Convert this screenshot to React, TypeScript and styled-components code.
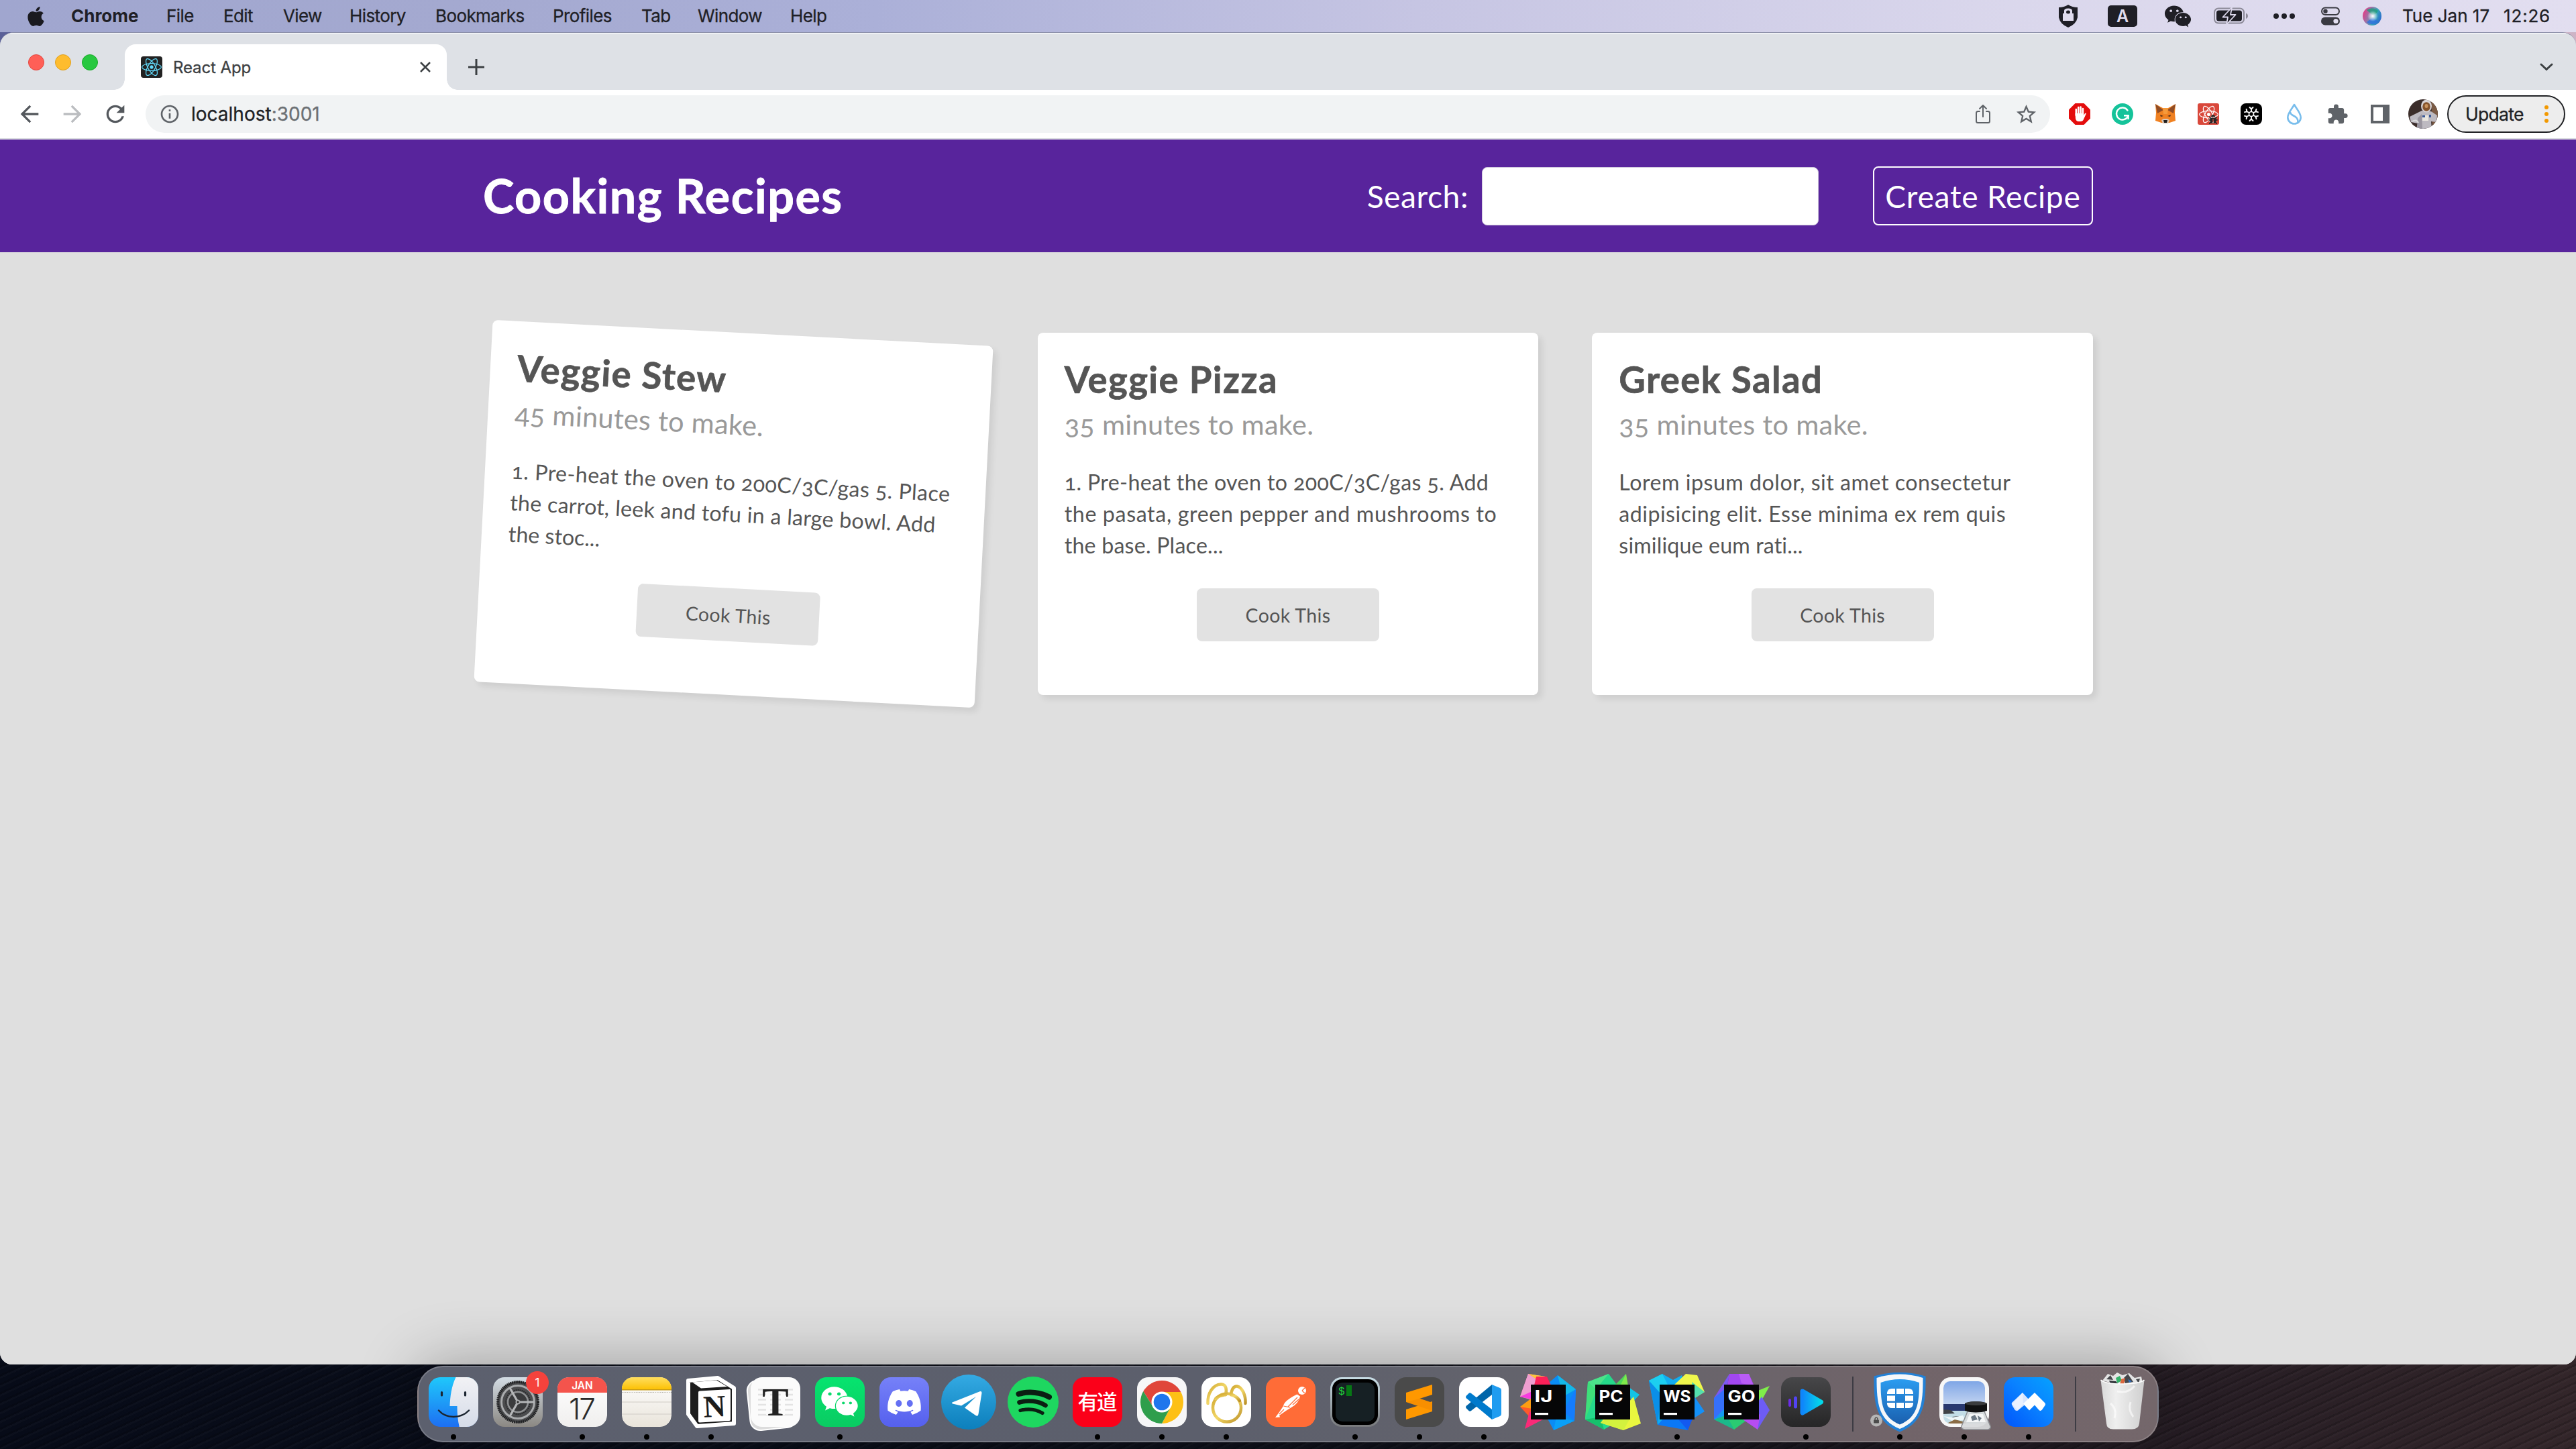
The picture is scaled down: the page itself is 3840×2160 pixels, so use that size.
import React from "react";
import styled, { createGlobalStyle, css } from "styled-components";
import { FaApple, FaWeixin, FaDiscord, FaReact, FaBug, FaLock } from "react-icons/fa";
import { MdArrowBack, MdArrowForward, MdRefresh, MdStarOutline, MdExtension, MdOutlineInfo } from "react-icons/md";
import { IoShareOutline } from "react-icons/io5";

const uiFont = `Inter, "Liberation Sans", sans-serif`;
const pageFont = `Lato, "Open Sans", sans-serif`;

const GlobalStyle = createGlobalStyle`
  *, *::before, *::after { box-sizing: border-box; }
  body { margin: 0; background: #0a0d18; overflow: hidden; }
  h1, h2, p { margin: 0; }
`;

/* ---------- desktop ---------- */

const Desktop = styled.div`
  width: 3840px;
  height: 2160px;
  display: flex;
  flex-direction: column;
  font-family: ${uiFont};
  background:
    linear-gradient(90deg, #5a6098 0, #a79fc0 50%, #cdb4c6 100%) 0 0 / 100% 90px no-repeat,
    repeating-linear-gradient(155deg, rgba(255, 255, 255, 0.018) 0 3px, transparent 3px 9px, rgba(0, 0, 0, 0.16) 9px 12px),
    linear-gradient(90deg, #070b18 0, #0a0e1a 30%, #12131c 60%, #261d24 85%, #33262a 100%);
`;

const MenuBar = styled.header`
  height: 48px;
  flex: none;
  display: flex;
  justify-content: space-between;
  align-items: center;
  padding: 0 38px 0 37px;
  color: #1f1f26;
  font-size: 26px;
  line-height: 46px;
  white-space: pre;
  background: linear-gradient(90deg, #a0a6cf 0, #a4a9d0 18%, #abb0d8 34%, #c6c5e3 55%, #dad7ec 78%, #e2def0 100%);
`;

const MenuGroup = styled.div`
  display: flex;
  align-items: center;
`;

const MenuApple = styled.span`
  width: 69px;
  display: flex;
  color: #1a1a20;
`;

const MenuItem = styled.span<{ $width: number; $strong?: boolean }>`
  width: ${(p) => p.$width}px;
  font-weight: ${(p) => (p.$strong ? 700 : 400)};
  letter-spacing: ${(p) => (p.$strong ? 0 : -0.6)}px;
  -webkit-text-stroke: ${(p) => (p.$strong ? 0 : 0.3)}px currentColor;
`;

const StatusSlot = styled.span<{ $width: number }>`
  width: ${(p) => p.$width}px;
  display: flex;
  justify-content: center;
  align-items: center;
`;

const Clock = styled.span`
  width: 221px;
  display: flex;
  justify-content: space-between;
  -webkit-text-stroke: 0.3px currentColor;
`;

const ClockTime = styled.span`
  letter-spacing: 0.8px;
`;

/* ---------- browser window ---------- */

const Window = styled.section`
  flex: none;
  height: 1986px;
  display: flex;
  flex-direction: column;
  border-radius: 20px 20px 18px 18px;
  overflow: hidden;
  background: #dfdfdf;
  border-top: 1px solid #8b8fa8;
`;

const TabStrip = styled.div`
  flex: none;
  height: 85px;
  display: flex;
  align-items: flex-end;
  background: #dee1e6;
  border-top: 2px solid #eff1f4;
  padding: 0 34px 0 42px;
`;

const TrafficLights = styled.div`
  display: flex;
  gap: 16px;
  width: 144px;
  height: 82px;
  align-items: center;
`;

const Light = styled.span<{ $fill: string; $edge: string }>`
  width: 24px;
  height: 24px;
  border-radius: 50%;
  background: ${(p) => p.$fill};
  border: 1px solid ${(p) => p.$edge};
`;

const Tab = styled.div`
  position: relative;
  width: 480px;
  height: 68px;
  display: flex;
  align-items: center;
  padding: 0 24px;
  gap: 16px;
  background: #fff;
  border-radius: 16px 16px 0 0;
  color: #3c4043;
  font-size: 24px;

  &::before,
  &::after {
    content: "";
    position: absolute;
    bottom: 0;
    width: 16px;
    height: 16px;
  }
  &::before {
    left: -16px;
    background: radial-gradient(circle at 0 0, transparent 15.5px, #fff 16px);
  }
  &::after {
    right: -16px;
    background: radial-gradient(circle at 100% 0, transparent 15.5px, #fff 16px);
  }
`;

const Favicon = styled.span`
  width: 32px;
  height: 32px;
  border-radius: 4px;
  display: grid;
  place-items: center;
  background: #222;
  color: #61dafb;
`;

const TabTitle = styled.span`
  flex: 1;
  letter-spacing: -0.1px;
  -webkit-text-stroke: 0.3px currentColor;
`;

const StripButton = styled.span<{ $push?: boolean }>`
  display: flex;
  align-items: center;
  height: 68px;
  padding-left: 32px;
  margin-left: ${(p) => (p.$push ? "auto" : 0)};
`;

const Toolbar = styled.div`
  flex: none;
  height: 74px;
  display: flex;
  align-items: center;
  padding: 0 16px 0 12px;
  background: #fff;
  border-bottom: 2px solid #dadce0;
`;

const NavButton = styled.span<{ $dim?: boolean }>`
  width: 64px;
  display: flex;
  justify-content: center;
  color: ${(p) => (p.$dim ? "#bbbdc0" : "#54585d")};
`;

const Omnibox = styled.div`
  flex: 1;
  height: 56px;
  margin: 0 12px 0 13px;
  padding: 0 20px;
  border-radius: 28px;
  background: #f1f3f4;
  color: #5f6368;
  display: flex;
  align-items: center;
  font-size: 28px;
`;

const Url = styled.span`
  flex: 1;
  padding-left: 16px;
  color: #6c7074;
  -webkit-text-stroke: 0.3px currentColor;
`;

const UrlHost = styled.span`
  color: #202124;
`;

const OmniAction = styled.span`
  width: 64px;
  display: flex;
  justify-content: center;
  &:last-child { margin-right: -16px; }
`;

const ExtensionSlot = styled.span`
  width: 64px;
  display: flex;
  justify-content: center;
  align-items: center;
`;

const ExtensionTile = styled.span<{ $bg: string; $radius: number }>`
  width: 32px;
  height: 32px;
  display: grid;
  place-items: center;
  color: #fff;
  background: ${(p) => p.$bg};
  border-radius: ${(p) => p.$radius}px;
`;

const StackedIcons = styled.span`
  position: relative;
  display: grid;
  svg:last-child { position: absolute; right: 1px; bottom: 0; }
`;

const UpdatePill = styled.div`
  width: 176px;
  height: 56px;
  margin-left: 4px;
  border: 2px solid #202124;
  border-radius: 28px;
  background: #ededed;
  color: #202124;
  font-size: 26.5px;
  letter-spacing: -0.7px;
  display: flex;
  align-items: center;
  justify-content: space-between;
  padding: 0 23px 0 25px;
  -webkit-text-stroke: 0.3px currentColor;
`;

const DotColumn = styled.span`
  display: flex;
  flex-direction: column;
  gap: 4px;
`;

const UpdateDot = styled.i`
  width: 6px;
  height: 6px;
  border-radius: 50%;
  background: #f29900;
`;

/* ---------- recipes page ---------- */

const Page = styled.main`
  flex: 1;
  font-family: ${pageFont};
  font-variant-numeric: oldstyle-nums;
  background: #dfdfdf;
  color: #555;
  white-space: nowrap;
`;

const Banner = styled.div`
  height: 168px;
  background: #58249c;
`;

const BannerInner = styled.div`
  width: 2400px;
  height: 100%;
  margin: 0 auto;
  display: flex;
  align-items: center;
  color: #fff;
`;

const SiteTitle = styled.h1`
  flex: 1;
  font-size: 70px;
  line-height: 82px;
  letter-spacing: 1.5px;
  padding-bottom: 2px;
  -webkit-text-stroke: 0.9px currentColor;
`;

const SearchLabel = styled.label`
  display: flex;
  align-items: center;
  gap: 20px;
  font-size: 46.2px;
  letter-spacing: 0.55px;
`;

const SearchInput = styled.input`
  width: 502px;
  height: 87px;
  border: 1px solid #cfc6dc;
  border-radius: 8px;
  background: #fff;
`;

const CreateLink = styled.button`
  width: 328px;
  height: 88px;
  margin-left: 81px;
  padding: 0;
  border: 2px solid #fff;
  border-radius: 8px;
  background: transparent;
  color: #fff;
  font: 46.2px ${pageFont};
  letter-spacing: 0.75px;
`;

const Grid = styled.div`
  width: 2400px;
  margin: 120px auto 0;
  display: grid;
  grid-template-columns: repeat(3, 1fr);
  gap: 80px;
`;

const Card = styled.article<{ $tilted?: boolean }>`
  height: 540px;
  padding: 41px 40px 40px;
  border-radius: 8px;
  background: #fff;
  box-shadow: 6px 6px 10px rgba(0, 0, 0, 0.08);
  display: flex;
  flex-direction: column;
  ${(p) => p.$tilted && css`transform: rotate(3deg);`}
`;

const CardTitle = styled.h2`
  font-size: 54.5px;
  line-height: 57px;
  letter-spacing: 1.4px;
  -webkit-text-stroke: 0.7px currentColor;
`;

const CardTime = styled.p`
  margin-top: 14px;
  font-size: 41.5px;
  line-height: 48px;
  letter-spacing: 0.27px;
  color: #999;
`;

const CardBody = styled.div`
  margin-top: 39px;
  font-size: 32.2px;
  line-height: 47px;
`;

const BodyLine = styled.p<{ $tracking: number }>`
  letter-spacing: ${(p) => p.$tracking}px;
`;

const CookButton = styled.button`
  align-self: center;
  width: 272px;
  height: 79px;
  margin-top: 41px;
  border: 0;
  border-radius: 8px;
  background: #e2e2e2;
  color: #555;
  font: 28.5px ${pageFont};
  letter-spacing: 0.35px;
`;

/* ---------- dock ---------- */

const DockArea = styled.footer`
  position: relative;
  flex: 1;
  display: flex;
  justify-content: center;
  align-items: flex-start;
  padding-top: 2px;
`;

const DockBar = styled.nav`
  height: 114px;
  display: flex;
  padding: 4px 4px 0;
  border: 2px solid rgba(255, 255, 255, 0.18);
  border-radius: 38px;
  background: linear-gradient(90deg, #5c606e 0, #5c5f6c 45%, #65646c 68%, #716469 85%, #74676b 100%);
  box-shadow: 0 -4px 90px rgba(0, 0, 0, 0.3);
`;

const DockItem = styled.div`
  width: 96px;
  display: flex;
  flex-direction: column;
  align-items: center;
  svg { overflow: visible; }
`;

const RunningDot = styled.i`
  width: 8px;
  height: 8px;
  border-radius: 50%;
  background: #000;
`;

const DockDivider = styled.div`
  width: 2px;
  height: 82px;
  margin: 10px 21px 0;
  background: #3d3c44;
`;

/* ---------- drawings ---------- */

const Tile = ({ fill }: { fill: string }) => <rect x="11" y="11" width="74" height="74" rx="17" fill={fill} />;

const Art = ({ children }: { children: React.ReactNode }) => (
  <svg width="96" height="96" viewBox="0 0 96 96">{children}</svg>
);

const Finder = () => (
  <Art>
    <defs>
      <linearGradient id="fb" x1="0" y1="0" x2="0" y2="1"><stop offset="0" stopColor="#1fc8fb" /><stop offset="1" stopColor="#1d6ff2" /></linearGradient>
      <linearGradient id="fw" x1="0" y1="0" x2="0" y2="1"><stop offset="0" stopColor="#f2f2f5" /><stop offset="1" stopColor="#d5dbe8" /></linearGradient>
      <clipPath id="fc"><rect x="11" y="11" width="74" height="74" rx="17" /></clipPath>
    </defs>
    <g clipPath="url(#fc)">
      <Tile fill="url(#fb)" />
      <path d="M52 10C45 24 43 40 42.500 54H53.500C53.500 66 54.500 76 57 86H86V10Z" fill="url(#fw)" />
    </g>
    <path d="M30.500 33.500V38M65.500 33.500V38" stroke="#1b2530" strokeWidth="3.200" strokeLinecap="round" />
    <path d="M26 60.500C37 73 59 73 71 60.500" stroke="#1b2530" strokeWidth="2.500" fill="none" strokeLinecap="round" />
  </Art>
);

const Settings = () => (
  <Art>
    <defs><linearGradient id="sg" x1="0" y1="0" x2="0" y2="1"><stop offset="0" stopColor="#d3dce4" /><stop offset="1" stopColor="#8b8883" /></linearGradient></defs>
    <Tile fill="url(#sg)" />
    <circle cx="48" cy="48" r="31" fill="#4b4c4e" />
    <circle cx="48" cy="48" r="30" fill="none" stroke="#1d1e20" strokeWidth="4" strokeDasharray="1.600 1.100" />
    <circle cx="48" cy="48" r="24.500" fill="none" stroke="#a9abad" strokeWidth="3" />
    <circle cx="48" cy="48" r="15" fill="#3a3b3d" stroke="#8f9193" strokeWidth="2.500" />
    <circle cx="48" cy="48" r="18" fill="none" stroke="#222325" strokeWidth="2" strokeDasharray="1.500 1.500" />
    <path d="M48 48H72M48 48L36 27M48 48L36 69" stroke="#b4b6b8" strokeWidth="3.200" />
    <circle cx="48" cy="48" r="3.500" fill="#a9abad" /><circle cx="48" cy="48" r="1.500" fill="#222" />
    <circle cx="77" cy="19" r="17" fill="#f5423c" />
    <text x="77" y="25" fontSize="17" fill="#fff" textAnchor="middle" fontFamily="Inter">1</text>
  </Art>
);

const Calendar = () => (
  <Art>
    <defs>
      <linearGradient id="cg" x1="0" y1="0" x2="0" y2="1"><stop offset="0" stopColor="#fff" /><stop offset="1" stopColor="#f0efee" /></linearGradient>
      <clipPath id="cc"><rect x="11" y="11" width="74" height="74" rx="17" /></clipPath>
    </defs>
    <g clipPath="url(#cc)"><Tile fill="url(#cg)" /><rect x="11" y="11" width="74" height="23" fill="#f4544c" /></g>
    <text x="48" y="29" fontSize="15.500" fontWeight="600" fill="#fff" textAnchor="middle" fontFamily="Inter">JAN</text>
    <text x="47" y="74" fontSize="44" fontWeight="300" letterSpacing="-2" fill="#2a2a2a" textAnchor="middle" fontFamily="Inter">17</text>
  </Art>
);

const Notes = () => (
  <Art>
    <defs>
      <linearGradient id="ng" x1="0" y1="0" x2="0" y2="1"><stop offset="0" stopColor="#ffffff" /><stop offset="1" stopColor="#e9e4da" /></linearGradient>
      <linearGradient id="ny" x1="0" y1="0" x2="0" y2="1"><stop offset="0" stopColor="#ffde60" /><stop offset="1" stopColor="#fcc000" /></linearGradient>
      <clipPath id="nc"><rect x="11" y="11" width="74" height="74" rx="17" /></clipPath>
    </defs>
    <g clipPath="url(#nc)"><Tile fill="url(#ng)" /><rect x="11" y="11" width="74" height="19" fill="url(#ny)" /><rect x="11" y="29" width="74" height="1.500" fill="#c79a14" /></g>
    <path d="M11 33.500H85" stroke="#a9a49a" strokeWidth="1.200" strokeDasharray="1.200 1.400" />
    <path d="M11 48H85M11 66H85" stroke="#cfccc6" strokeWidth="1.200" />
  </Art>
);

const Notion = () => (
  <Art>
    <path d="M14 16L58 12L82 27V80L27 84L14 66Z" fill="#1c1c1c" stroke="#fff" strokeWidth="6" strokeLinejoin="round" />
    <path d="M20 18.500L56 15.500L72 25L33 27.500Z" fill="#fff" />
    <path d="M31 31.500L76 29Q77 29 77 31V74Q77 76 75 76L31 78.500Q29 78.500 29 76.500V33.500Q29 31.500 31 31.500Z" fill="#fff" />
    <text x="53" y="70" fontSize="46" fontWeight="700" fill="#1c1c1c" textAnchor="middle" fontFamily="Liberation Serif" transform="rotate(-3 53 54)">N</text>
  </Art>
);

const Typora = () => (
  <Art>
    <rect x="8" y="14" width="70" height="74" rx="15" fill="#dcdcdc" transform="rotate(-6 43 51)" />
    <rect x="8" y="14" width="70" height="74" rx="15" fill="none" stroke="#fff" strokeWidth="2" transform="rotate(-6 43 51)" />
    <Tile fill="#fbfbfb" />
    <path d="M22 29.500H74M22 37H74M22 44.500H74M22 52H74M22 59.500H74M22 67H74" stroke="#e3e3e3" strokeWidth="2.400" />
    <path d="M37 29.500V67M59 29.500V67" stroke="#fbfbfb" strokeWidth="6" />
    <text x="48" y="67.500" fontSize="59" fontWeight="700" fill="#222" textAnchor="middle" fontFamily="Liberation Serif">T</text>
  </Art>
);

const WeChat = () => (
  <Art>
    <defs><linearGradient id="wg" x1="0" y1="0" x2="0" y2="1"><stop offset="0" stopColor="#06e46f" /><stop offset="1" stopColor="#0acb62" /></linearGradient></defs>
    <Tile fill="url(#wg)" />
    <FaWeixin x={19} y={19} size={57} color="#fff" />
  </Art>
);

const Discord = () => (
  <Art>
    <defs><linearGradient id="dg" x1="0" y1="0" x2="0" y2="1"><stop offset="0" stopColor="#7681f8" /><stop offset="1" stopColor="#5560ee" /></linearGradient></defs>
    <Tile fill="url(#dg)" />
    <FaDiscord x={21} y={21} size={54} color="#fff" />
  </Art>
);

const Telegram = () => (
  <Art>
    <defs><linearGradient id="tg" x1="0" y1="0" x2="0" y2="1"><stop offset="0" stopColor="#34aae3" /><stop offset="1" stopColor="#0c7fbc" /></linearGradient></defs>
    <circle cx="48" cy="48" r="41" fill="url(#tg)" />
    <path d="M23.500 48.500L64.500 32.200Q67.800 31 67.500 34.500L62.500 66Q62 70 58.500 68L42 56.500L59 40L37 53.500L24 50.500Q22 49.500 23.500 48.500Z" fill="#fff" />
  </Art>
);

const Spotify = () => (
  <Art>
    <circle cx="48" cy="48" r="38" fill="#1ed760" />
    <g fill="none" stroke="#0b1f12" strokeLinecap="round">
      <path d="M26.500 36C42 31.500 60 33.500 72 40.500" strokeWidth="8" />
      <path d="M27.500 48.500C41 44.500 56 46.500 66.500 53" strokeWidth="6.600" />
      <path d="M29 60.500C41 57.500 52 58.500 62 64.500" strokeWidth="5.200" />
    </g>
  </Art>
);

const Youdao = () => (
  <Art>
    <Tile fill="#fb0019" />
    <text x="47" y="59" fontSize="30.500" fontWeight="500" letterSpacing="-2" fill="#fff" textAnchor="middle" fontFamily="Noto Sans CJK SC">有道</text>
  </Art>
);

const Chrome = () => (
  <Art>
    <Tile fill="#f6f6f7" />
    <g transform="translate(48 48)">
      <path d="M0-15H28.300A32 32 0 0 0-27.700-16L-13 7.500Z" fill="#e0463a" />
      <path d="M13 7.500L0 32A32 32 0 0 0 28.300-15H0Z" fill="#fdc016" />
      <path d="M-13 7.500L-27.700-16A32 32 0 0 0 0 32L13 7.500Z" fill="#2f9e4c" />
      <circle r="15.500" fill="#fff" /><circle r="12.300" fill="#1f76ec" />
    </g>
  </Art>
);

const Navicat = () => (
  <Art>
    <defs><linearGradient id="gd" x1="0" y1="0" x2="1" y2="1"><stop offset="0" stopColor="#cfa52c" /><stop offset="0.5" stopColor="#f2d768" /><stop offset="1" stopColor="#bd932a" /></linearGradient></defs>
    <Tile fill="#fff" />
    <g fill="none" stroke="url(#gd)" strokeWidth="4.500" strokeLinecap="round" strokeLinejoin="round">
      <circle cx="49" cy="56.500" r="21" />
      <path d="M20.500 50C20 35 28 22 40 21.500C48 21 49 30 47 37" />
      <path d="M55 37C56 30 58 24 64 24.500C72 26 77 38 76.500 50" />
      <path d="M32 43C34 41 35 39 47 37M55 37C62 39 65 41 68 46" />
    </g>
  </Art>
);

const Postman = () => (
  <Art>
    <Tile fill="#ff6c37" />
    <circle cx="65" cy="31" r="6" fill="#fff" />
    <path d="M65 31L69 27M65 31L69 35" stroke="#ff6c37" strokeWidth="1.200" />
    <path d="M57.500 36.500L62 39.500Q60 50 49 56L41 61L31 68L32 70.500L25 71L30 64.500L37 54Q38 46 57.500 36.500Z" fill="#fff" />
    <path d="M58 41L44 55M37.500 54L47 56M31 66L38 59M60 44L51 52" stroke="#ff6c37" strokeWidth="1.200" />
  </Art>
);

const Terminal = () => (
  <Art>
    <defs><linearGradient id="tm" x1="0" y1="0" x2="0" y2="1"><stop offset="0" stopColor="#c8dde6" /><stop offset="1" stopColor="#77787b" /></linearGradient></defs>
    <Tile fill="url(#tm)" />
    <rect x="14" y="14" width="68" height="68" rx="14.500" fill="#000" />
    <rect x="19" y="19" width="58" height="58" rx="10" fill="#162024" />
    <text x="23" y="37" fontSize="16" fill="#22d83b" fontFamily="Liberation Mono">$</text>
    <rect x="35" y="23" width="8" height="16" fill="#067814" />
  </Art>
);

const Sublime = () => (
  <Art>
    <Tile fill="#4a4a4a" />
    <path d="M28 59L67 47V62L28 74Z" fill="#ff9800" />
    <path d="M28 34V48L67 61V49L48 42.500Z" fill="#f78f00" />
    <path d="M28 34L67 22V37L48 43L28 48Z" fill="#ff9800" />
  </Art>
);

const VSCode = () => (
  <Art>
    <Tile fill="#fff" />
    <path d="M60 22V37L29 61Q27 62.500 25.500 61L21.500 57Q20.500 55.500 21.500 54Z" fill="#0065a9" />
    <path d="M60 74V59L29 35Q27 33.500 25.500 35L21.500 39Q20.500 40.500 21.500 42Z" fill="#007acc" />
    <path d="M60 22L72 27Q74 28 74 30V66Q74 68 72 69L60 74Z" fill="#1f9cf0" />
  </Art>
);

type Facet = [string, string];

const JetBrains = ({ label, width, facets }: { label: string; width: number; facets: Facet[] }) => (
  <Art>
    {facets.map(([points, fill], i) => <polygon key={i} points={points} fill={fill} />)}
    <rect x="22" y="22" width="52" height="52" fill="#060607" />
    <text x="27.500" y="48" fontSize="24" fontWeight="700" fill="#fff" fontFamily="Inter" textLength={width} lengthAdjust="spacingAndGlyphs">{label}</text>
    <rect x="28" y="64" width="20" height="3.200" fill="#fff" />
  </Art>
);

const intellij: Facet[] = [
  ["62,8 89,29 87,76 56,90 40,60 48,20", "#0a8cf5"],
  ["62,8 89,29 70,40", "#14b8e8"],
  ["89,29 87,76 70,62", "#147cff"],
  ["56,90 87,76 60,70", "#0aa0f8"],
  ["18,6 44,10 24,45 6,40", "#f58ab4"],
  ["18,6 44,10 30,14", "#fbc53c"],
  ["18,6 30,14 20,40 6,40", "#ee9fd0"],
  ["30,10 46,10 60,40 22,46", "#fb2058"],
  ["6,40 24,32 24,44", "#f83ae0"],
  ["6,55 22,43 24,66", "#fd9d12"],
  ["6,55 24,58 20,70", "#ff5a2a"],
  ["20,62 44,72 13,88", "#fb2a78"],
];
const pycharm: Facet[] = [
  ["11,18 42,6 60,30 50,80 35,89 7,74", "#25d98b"],
  ["11,18 42,6 22,30", "#4ce38a"],
  ["11,18 24,30 7,74", "#3fe07a"],
  ["7,74 30,70 35,89", "#16c06c"],
  ["68,6 72,30 50,26", "#7fe94c"],
  ["50,24 68,6 56,30", "#4bd65a"],
  ["72,26 88,37 76,50", "#12c4e6"],
  ["72,48 79,40 90,80 64,90 30,79 40,66", "#e9f63f"],
  ["40,72 74,72 64,90 30,79", "#d3f23e"],
];
const webstorm: Facet[] = [
  ["6,16 26,6 42,15 55,8 60,40 40,78 19,82", "#12aef0"],
  ["6,16 26,6 34,22 22,40", "#1ccff0"],
  ["6,16 24,36 19,82", "#0a8fe8"],
  ["61,6 78,8 89,33 70,44 44,22", "#eff64c"],
  ["70,18 89,33 72,44", "#54dfae"],
  ["74,40 89,62 70,74", "#1490f8"],
  ["19,82 30,70 72,66 64,90", "#0b78f5"],
  ["50,74 74,66 64,90", "#1359f0"],
];
const goland: Facet[] = [
  ["30,6 59,6 68,26 24,40", "#a247f0"],
  ["44,6 59,6 66,24 48,20", "#b95cf6"],
  ["30,6 24,40 7,42", "#7d58f2"],
  ["7,42 26,26 30,60 7,74", "#3670fa"],
  ["7,74 26,54 24,76", "#149af0"],
  ["7,74 30,66 50,74 37,89", "#1bb98a"],
  ["37,89 28,72 60,72", "#2acb72"],
  ["90,24 70,60 70,32", "#7fee4a"],
  ["78,40 90,60 72,89 64,60", "#6d5cf5"],
  ["50,74 76,66 72,89", "#b64cf2"],
];

const Player = () => (
  <Art>
    <defs>
      <linearGradient id="pg" x1="0" y1="0" x2="1" y2="0"><stop offset="0" stopColor="#0f86fb" /><stop offset="1" stopColor="#03d9ea" /></linearGradient>
      <linearGradient id="pt" x1="0" y1="0" x2="0" y2="1"><stop offset="0" stopColor="#474749" /><stop offset="1" stopColor="#262627" /></linearGradient>
    </defs>
    <Tile fill="url(#pt)" />
    <path d="M43 32L70.500 48L43 64Z" fill="url(#pg)" stroke="url(#pg)" strokeWidth="7" strokeLinejoin="round" />
    <path d="M24 45V53" stroke="#6c2bea" strokeWidth="4" strokeLinecap="round" />
    <path d="M32.500 42V55" stroke="#5243f2" strokeWidth="5" strokeLinecap="round" />
  </Art>
);

const Shield = () => (
  <Art>
    <defs><linearGradient id="sh" x1="0" y1="0" x2="0" y2="1"><stop offset="0" stopColor="#2b9cf0" /><stop offset="1" stopColor="#1a5fae" /></linearGradient></defs>
    <path d="M9.500 9.500Q48-2 86.500 9.500C87 50 84 78 48 92.500C12 78 9 50 9.500 9.500Z" fill="#2381d6" />
    <path d="M13.500 12Q48 1 82.500 12C82.500 50 80 75 48 88C16 75 13.500 50 13.500 12Z" fill="#f6f8fa" />
    <path d="M19.500 19Q48 9 77 19C77 50 74 71 48 81.500C22 71 19.500 50 19.500 19Z" fill="url(#sh)" />
    <g fill="#fff">
      <path d="M36 28H41V36H29V34Q30 28 36 28Z" /><rect x="43" y="28" width="11" height="8" /><path d="M56 28H61Q67 28 68 34V36H56Z" />
      <rect x="29" y="38.500" width="12" height="8" /><rect x="56" y="38.500" width="12" height="8" />
      <path d="M36 57H41V49H29V51Q30 57 36 57Z" /><rect x="43" y="49" width="11" height="8" /><path d="M56 57H61Q67 57 68 51V49H56Z" />
    </g>
    <circle cx="13" cy="75.500" r="9" fill="#b5b5b5" />
    <FaLock x={8.5} y={70.5} size={9} color="#4b4b4b" />
  </Art>
);

const Preview = () => (
  <Art>
    <defs>
      <linearGradient id="sky" x1="0" y1="0" x2="0" y2="1"><stop offset="0" stopColor="#7fa6e6" /><stop offset="1" stopColor="#c3d4f1" /></linearGradient>
      <clipPath id="pc"><rect x="17" y="17" width="62" height="63" rx="10" /></clipPath>
    </defs>
    <Tile fill="#f7f7f7" />
    <g clipPath="url(#pc)">
      <rect x="17" y="17" width="62" height="35" fill="url(#sky)" />
      <rect x="17" y="51" width="62" height="12" fill="#29386f" />
      <rect x="17" y="61" width="62" height="20" fill="#c3dde6" />
      <path d="M17 59L28 60L34 65L17 66ZM30 70L40 69L44 72L34 73Z" fill="#3f4347" />
      <path d="M17 69L30 71L46 68L50 75L30 76Z" fill="#eef7f9" />
      <path d="M22 80L34 74L50 78L52 82Z" fill="#8a6c46" />
    </g>
    <path d="M53 62H78L87 84Q88 88 83 89H49Q43 88 44 84Z" fill="#d7d9db" fillOpacity="0.920" stroke="#8d9094" strokeWidth="1.500" />
    <path d="M56 66H76L80 78H51Z" fill="#f4f6f7" />
    <path d="M58 70L64 67L68 74L60 76ZM68 68L74 72L70 77Z" fill="#6d7a86" />
    <path d="M49 50Q65 44 82 50V61Q65 66 49 61Z" fill="#101011" />
    <ellipse cx="65.500" cy="50" rx="16" ry="3" fill="#3b3c3e" />
  </Art>
);

const MeetApp = () => (
  <Art>
    <defs><linearGradient id="mg" x1="0" y1="1" x2="1" y2="0"><stop offset="0" stopColor="#0055fb" /><stop offset="0.550" stopColor="#0a82ff" /><stop offset="1" stopColor="#05a2ff" /></linearGradient></defs>
    <Tile fill="url(#mg)" />
    <path d="M39 34L50 46L32 60.500Q29 62 27 59L23 52Q22 50 23.500 48.500Z" fill="#d7e5ff" />
    <path d="M57 34L72 49Q74 51 72.500 53L68 59.500Q66 62 63.500 60L57 52.500L49 60.500L40 50.500Z" fill="#fff" />
    <path d="M23.500 51L32 60.500L40 51L39 34Z" fill="#eaf1ff" />
  </Art>
);

const Trash = () => (
  <Art>
    <defs><linearGradient id="tr" x1="0" y1="0" x2="1" y2="0"><stop offset="0" stopColor="#d9d9d9" /><stop offset="0.350" stopColor="#efefef" /><stop offset="1" stopColor="#cfcfcf" /></linearGradient></defs>
    <path d="M18 16L26 6L34 9L40 4L48 8L58 5L66 12L76 10L78 20L48 24Z" fill="#e4e4e4" />
    <path d="M24 14L30 8L34 15ZM50 12L56 6L64 18L52 20ZM68 14L74 13L72 20Z" fill="#45474b" />
    <path d="M38 12L44 9L47 16L40 20Z" fill="#35b26a" /><path d="M46 14L52 12L50 22L44 22Z" fill="#d9673e" /><path d="M28 16L38 17L42 22L30 21Z" fill="#2f3238" /><path d="M56 14L62 17L58 19Z" fill="#2e6fc2" />
    <path d="M15.500 15C24 23 72 23 80.500 15L73 80Q72 88.500 62 88.500H34Q24.500 88.500 24 80Z" fill="url(#tr)" />
    <path d="M15.500 15C24 23 72 23 80.500 15" fill="none" stroke="#fff" strokeWidth="1.600" />
    <path d="M40 32Q56 36 66 24M30 50Q40 58 36 72M60 48Q56 60 64 70" fill="none" stroke="#fff" strokeOpacity="0.600" strokeWidth="3" />
  </Art>
);

const ShieldLock = () => (
  <svg width="30" height="34" viewBox="0 0 30 34">
    <path d="M1 4Q9 4 15 0Q21 4 29 4V19Q27 29 15 34Q3 29 1 19Z" fill="#1f1f26" />
    <path d="M7 13H23V24H7ZM9 13V9Q9 5.500 15 5.500Q21 5.500 21 9V13" fill="#e0dcee" />
    <ellipse cx="15" cy="11" rx="3" ry="2.500" fill="#1f1f26" />
  </svg>
);

const InputSource = () => (
  <svg width="44" height="32" viewBox="0 0 44 32">
    <rect width="44" height="32" rx="5" fill="#1f1f26" />
    <text x="22" y="25" fontSize="25" fontWeight="600" fill="#e0dcee" textAnchor="middle" fontFamily="Inter">A</text>
  </svg>
);

const Battery = () => (
  <svg width="52" height="28" viewBox="0 0 52 28">
    <rect x="1" y="2.500" width="44" height="22" rx="6" fill="none" stroke="#8c8a98" strokeWidth="2" />
    <path d="M48 9.500Q51 11 51 13.500Q51 16.500 48 18Z" fill="#8c8a98" />
    <rect x="4" y="5.500" width="38" height="16" rx="3.500" fill="#1f1f26" />
    <path d="M27 1L13.500 15.500H21L19 26.500L32.500 12H25Z" fill="#1f1f26" stroke="#dedaee" strokeWidth="1.800" strokeLinejoin="round" />
  </svg>
);

const Ellipsis = () => (
  <svg width="32" height="8" viewBox="0 0 32 8" fill="#1f1f26">
    <circle cx="4" cy="4" r="4" /><circle cx="16" cy="4" r="4" /><circle cx="28" cy="4" r="4" />
  </svg>
);

const ControlCenter = () => (
  <svg width="30" height="28" viewBox="0 0 30 28">
    <rect x="2" y="1.500" width="26" height="10.500" rx="5.250" fill="none" stroke="#3a3a42" strokeWidth="2" />
    <circle cx="7.500" cy="6.700" r="3.200" fill="#3a3a42" />
    <rect x="1" y="15.500" width="28" height="12" rx="6" fill="#3a3a42" />
    <circle cx="23" cy="21.500" r="3.600" fill="#e3dff0" />
  </svg>
);

const Siri = () => (
  <svg width="28" height="28" viewBox="0 0 28 28">
    <defs>
      <linearGradient id="si" x1="0" y1="0.300" x2="1" y2="0.700"><stop offset="0" stopColor="#e73a84" /><stop offset="0.400" stopColor="#8a7fae" /><stop offset="0.650" stopColor="#35a6b8" /><stop offset="1" stopColor="#2a62d0" /></linearGradient>
      <radialGradient id="sw"><stop offset="0" stopColor="#fff" /><stop offset="1" stopColor="#fff" stopOpacity="0" /></radialGradient>
    </defs>
    <circle cx="14" cy="14" r="14" fill="url(#si)" />
    <path d="M6 5Q14-1 23 6Q20 12 14 12Z" fill="#1f9d7d" fillOpacity="0.800" />
    <path d="M6 23Q14 30 23 22L15 16Z" fill="#2f6fe0" fillOpacity="0.800" />
    <circle cx="15" cy="14" r="8" fill="url(#sw)" />
  </svg>
);

const Cross = () => (
  <svg width="16" height="16" viewBox="0 0 16 16"><path d="M1 1L15 15M15 1L1 15" stroke="#3c4043" strokeWidth="2.500" /></svg>
);
const Plus = () => (
  <svg width="24" height="24" viewBox="0 0 24 24"><path d="M12 0V24M0 12H24" stroke="#3c4043" strokeWidth="3" /></svg>
);
const Chevron = () => (
  <svg width="20" height="12" viewBox="0 0 20 12"><path d="M2 2L10 9.500L18 2" fill="none" stroke="#3c4043" strokeWidth="3" strokeLinecap="round" /></svg>
);

const Octagon = () => (
  <svg width="32" height="32" viewBox="0 0 32 32">
    <path d="M9.500 0H22.500L32 9.500V22.500L22.500 32H9.500L0 22.500V9.500Z" fill="#e40d0d" />
    <path d="M10.800 9V18M14.200 6V17M17.600 5.500V17M20.900 8V18" stroke="#fff" strokeWidth="2.600" strokeLinecap="round" />
    <path d="M9.500 15H22.200V18L24 15Q25.500 14 25.800 15.500L21.500 25Q20.500 27 17.500 27H14.500Q11 27 10 23Z" fill="#fff" />
  </svg>
);

const Grammarly = () => (
  <svg width="32" height="32" viewBox="0 0 32 32">
    <circle cx="16" cy="16" r="16" fill="#15c39a" />
    <path d="M23.500 10.500A9 9 0 1 0 24.500 18.500" fill="none" stroke="#fff" strokeWidth="2.400" strokeLinecap="round" />
    <path d="M18 18.200H24.600V24" fill="none" stroke="#fff" strokeWidth="2.400" />
  </svg>
);

const Fox = () => (
  <svg width="32" height="32" viewBox="0 0 32 32">
    <path d="M1 1L12 7H20L31 1L30 14L31 26L22 29H10L1 26L2 14Z" fill="#f08121" />
    <path d="M1 1L13 10L4 15ZM31 1L19 10L28 15Z" fill="#8f4d26" />
    <path d="M12 7H20L19 16H13Z" fill="#f59a3b" />
    <path d="M8 17L13 19L9 20ZM24 17L19 19L23 20Z" fill="#4a2b1a" />
    <path d="M10 25L13 23H19L22 25L20 30H12Z" fill="#d9c7b8" />
    <path d="M13 25H19L18 29H14Z" fill="#20201f" />
  </svg>
);

const Hexa = () => (
  <svg width="22" height="22" viewBox="-11 -11 22 22" fill="none" stroke="#fff">
    <circle r="3.500" strokeWidth="1.600" />
    {[0, 60, 120, 180, 240, 300].map((a) => (
      <g key={a} transform={`rotate(${a})`}>
        <path d="M0-4V-8M0-7.500L-2.500-10M0-7.500L2.500-10" strokeWidth="1.900" strokeLinecap="round" />
      </g>
    ))}
  </svg>
);

const Drop = () => (
  <svg width="24" height="32" viewBox="0 0 24 32" fill="none" stroke="#78bdec" strokeWidth="2.600" strokeLinejoin="round">
    <path d="M12 2C8 9 2.300 14.500 2.300 21A9.700 9.500 0 0 0 21.700 21C21.700 14.500 16 9 12 2Z" />
    <path d="M6 13C6 20 18 17 17.500 28" />
  </svg>
);

const SidePanel = () => (
  <svg width="28" height="28" viewBox="0 0 28 28">
    <path fillRule="evenodd" d="M0 0H28V28H0ZM4 4V24H18V4Z" fill="#5f6368" />
  </svg>
);

const Astronaut = () => (
  <svg width="44" height="44" viewBox="0 0 44 44">
    <defs><clipPath id="ac"><circle cx="22" cy="22" r="22" /></clipPath></defs>
    <g clipPath="url(#ac)">
      <rect width="44" height="44" fill="#3b2d2a" />
      <path d="M34 0H44V44H36Z" fill="#7a5a44" />
      <path d="M2 26L14 20L20 17L34 18L43 24L42 34L34 33L35 44H12L14 36L4 34Z" fill="#bdbac1" />
      <path d="M14 28L20 22L21 44H13Z" fill="#99959f" />
      <path d="M0 34L12 40L14 44H0Z" fill="#4a3a34" />
      <ellipse cx="27" cy="10" rx="8" ry="9.500" fill="#d8d5d8" />
      <ellipse cx="27" cy="11" rx="5.800" ry="6.800" fill="#84532c" />
      <ellipse cx="27" cy="10" rx="2.500" ry="3" fill="#c9935e" />
      <rect x="21" y="24" width="9" height="8" fill="#e8e6df" />
      <path d="M21 24H25V27H21ZM31 23H34V27H31Z" fill="#3a5a98" />
      <path d="M6 33Q12 29 15 35" stroke="#ddd" strokeWidth="2" fill="none" />
    </g>
  </svg>
);

/* ---------- data ---------- */

const menuItems: { label: string; width: number; strong?: boolean }[] = [
  { label: "Chrome", width: 142, strong: true },
  { label: "File", width: 85 },
  { label: "Edit", width: 89 },
  { label: "View", width: 99 },
  { label: "History", width: 128 },
  { label: "Bookmarks", width: 175 },
  { label: "Profiles", width: 132 },
  { label: "Tab", width: 84 },
  { label: "Window", width: 138 },
  { label: "Help", width: 60 },
];

const statusItems: { width: number; icon: React.ReactNode }[] = [
  { width: 80, icon: <ShieldLock /> },
  { width: 82, icon: <InputSource /> },
  { width: 82, icon: <FaWeixin size={41} /> },
  { width: 78, icon: <Battery /> },
  { width: 80, icon: <Ellipsis /> },
  { width: 58, icon: <ControlCenter /> },
  { width: 66, icon: <Siri /> },
  { width: 12, icon: null },
];

const extensions: React.ReactNode[] = [
  <Octagon />,
  <Grammarly />,
  <Fox />,
  <ExtensionTile $bg="#d9483b" $radius={3}>
    <StackedIcons><FaReact size={29} /><FaBug size={14} color="#262626" /></StackedIcons>
  </ExtensionTile>,
  <ExtensionTile $bg="#000" $radius={8}><Hexa /></ExtensionTile>,
  <Drop />,
  <MdExtension size={33} color="#5f6368" />,
  <SidePanel />,
  <Astronaut />,
];

interface Recipe {
  title: string;
  time: string;
  lines: { text: string; tracking: number }[];
  tilted?: boolean;
}

const recipes: Recipe[] = [
  {
    title: "Veggie Stew",
    time: "45 minutes to make.",
    tilted: true,
    lines: [
      { text: "1. Pre-heat the oven to 200C/3C/gas 5. Place", tracking: 0.42 },
      { text: "the carrot, leek and tofu in a large bowl. Add", tracking: 0.26 },
      { text: "the stoc...", tracking: 0 },
    ],
  },
  {
    title: "Veggie Pizza",
    time: "35 minutes to make.",
    lines: [
      { text: "1. Pre-heat the oven to 200C/3C/gas 5. Add", tracking: 0.36 },
      { text: "the pasata, green pepper and mushrooms to", tracking: 0.62 },
      { text: "the base. Place...", tracking: 0.2 },
    ],
  },
  {
    title: "Greek Salad",
    time: "35 minutes to make.",
    lines: [
      { text: "Lorem ipsum dolor, sit amet consectetur", tracking: 0.5 },
      { text: "adipisicing elit. Esse minima ex rem quis", tracking: 0.45 },
      { text: "similique eum rati...", tracking: 0.13 },
    ],
  },
];

const dockApps: { icon: React.ReactNode; running?: boolean; dividerAfter?: boolean }[] = [
  { icon: <Finder />, running: true },
  { icon: <Settings /> },
  { icon: <Calendar />, running: true },
  { icon: <Notes />, running: true },
  { icon: <Notion />, running: true },
  { icon: <Typora /> },
  { icon: <WeChat />, running: true },
  { icon: <Discord /> },
  { icon: <Telegram /> },
  { icon: <Spotify /> },
  { icon: <Youdao />, running: true },
  { icon: <Chrome />, running: true },
  { icon: <Navicat />, running: true },
  { icon: <Postman /> },
  { icon: <Terminal />, running: true },
  { icon: <Sublime />, running: true },
  { icon: <VSCode />, running: true },
  { icon: <JetBrains label="IJ" width={27} facets={intellij} /> },
  { icon: <JetBrains label="PC" width={36} facets={pycharm} /> },
  { icon: <JetBrains label="WS" width={41} facets={webstorm} />, running: true },
  { icon: <JetBrains label="GO" width={41} facets={goland} /> },
  { icon: <Player />, running: true, dividerAfter: true },
  { icon: <Shield />, running: true },
  { icon: <Preview />, running: true },
  { icon: <MeetApp />, running: true, dividerAfter: true },
  { icon: <Trash /> },
];

export default function App() {
  return (
    <Desktop>
      <GlobalStyle />
      <MenuBar>
        <MenuGroup>
          <MenuApple><FaApple size={33} /></MenuApple>
          {menuItems.map((m) => (
            <MenuItem key={m.label} $width={m.width} $strong={m.strong}>{m.label}</MenuItem>
          ))}
        </MenuGroup>
        <MenuGroup>
          {statusItems.map((s, i) => <StatusSlot key={i} $width={s.width}>{s.icon}</StatusSlot>)}
          <Clock><span>Tue Jan 17</span><ClockTime>12:26</ClockTime></Clock>
        </MenuGroup>
      </MenuBar>

      <Window>
        <TabStrip>
          <TrafficLights>
            <Light $fill="#ff5f57" $edge="#e2463f" />
            <Light $fill="#febc2e" $edge="#e0a01e" />
            <Light $fill="#28c840" $edge="#1aab29" />
          </TrafficLights>
          <Tab>
            <Favicon><FaReact size={30} /></Favicon>
            <TabTitle>React App</TabTitle>
            <Cross />
          </Tab>
          <StripButton><Plus /></StripButton>
          <StripButton $push><Chevron /></StripButton>
        </TabStrip>
        <Toolbar>
          <NavButton><MdArrowBack size={40} /></NavButton>
          <NavButton $dim><MdArrowForward size={40} /></NavButton>
          <NavButton><MdRefresh size={40} /></NavButton>
          <Omnibox>
            <MdOutlineInfo size={32} />
            <Url><UrlHost>localhost</UrlHost>:3001</Url>
            <OmniAction><IoShareOutline size={32} /></OmniAction>
            <OmniAction><MdStarOutline size={35} /></OmniAction>
          </Omnibox>
          {extensions.map((e, i) => <ExtensionSlot key={i}>{e}</ExtensionSlot>)}
          <UpdatePill>
            Update
            <DotColumn><UpdateDot /><UpdateDot /><UpdateDot /></DotColumn>
          </UpdatePill>
        </Toolbar>

        <Page>
          <Banner>
            <BannerInner>
              <SiteTitle>Cooking Recipes</SiteTitle>
              <SearchLabel>Search:<SearchInput /></SearchLabel>
              <CreateLink>Create Recipe</CreateLink>
            </BannerInner>
          </Banner>
          <Grid>
            {recipes.map((r) => (
              <Card key={r.title} $tilted={r.tilted}>
                <CardTitle>{r.title}</CardTitle>
                <CardTime>{r.time}</CardTime>
                <CardBody>
                  {r.lines.map((l) => <BodyLine key={l.text} $tracking={l.tracking}>{l.text}</BodyLine>)}
                </CardBody>
                <CookButton>Cook This</CookButton>
              </Card>
            ))}
          </Grid>
        </Page>
      </Window>

      <DockArea>
        <DockBar>
          {dockApps.map((a, i) => (
            <React.Fragment key={i}>
              <DockItem>
                {a.icon}
                {a.running && <RunningDot />}
              </DockItem>
              {a.dividerAfter && <DockDivider />}
            </React.Fragment>
          ))}
        </DockBar>
      </DockArea>
    </Desktop>
  );
}
